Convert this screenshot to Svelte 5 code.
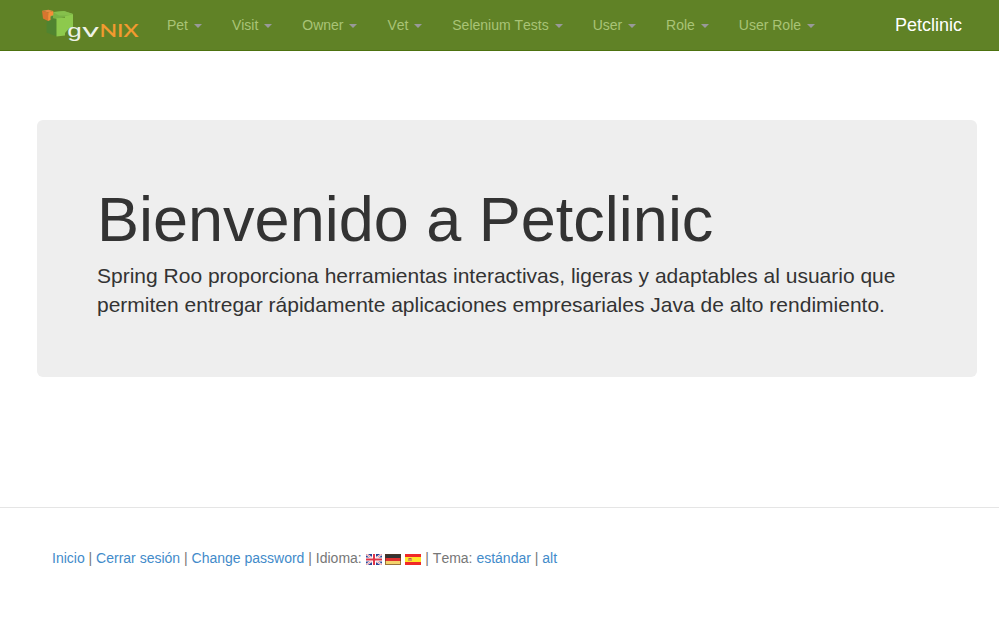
<script>
  const menus = ['Pet', 'Visit', 'Owner', 'Vet', 'Selenium Tests', 'User', 'Role', 'User Role'];
</script>

<header>
  <a class="logo" href="#home" aria-label="gvNIX">
    <svg width="100" height="36" viewBox="40 6 100 36">
      <polygon points="46.5,17 57,19 56.8,36.5 46.5,32.5" fill="#508430" />
      <polygon points="51,12.5 64,11 73,14 72.5,15.5 57,19 47,17" fill="#79b244" />
      <polygon points="53,12 64,11 73,14 67,15.5 59,15.5" fill="#86bf4c" />
      <polygon points="56.5,18.3 65,17.7 65,16.2 73,14.3 73,27.5 69,28.5 65,33 65,35.5 56.5,36.5" fill="#8dc94d" />
      <polygon points="49,17.5 53,15.5 53,19 50,21" fill="#548834" />
      <polygon points="42,10.8 48.5,9.8 53.3,11 48.5,12.6" fill="#e68a45" />
      <polygon points="42,10.8 48.5,12.4 48,21 43,18.5" fill="#d8752f" />
      <polygon points="48.3,12.4 53.3,11 53.3,15.2 50.5,16 50.5,20 48,21" fill="#f68d38" />
      <g transform="translate(67.2 36.7) scale(1.45 1)">
        <text class="light">g</text>
      </g>
      <g transform="translate(82 37) scale(1.75 1)">
        <text class="light thin">v</text>
      </g>
      <text x="99.4" y="37" textLength="39" lengthAdjust="spacingAndGlyphs" fill="#f49b30">NIX</text>
    </svg>
  </a>
  <nav>
    {#each menus as menu}
      <a href="#menu">{menu} <b class="caret"></b></a>
    {/each}
  </nav>
  <a class="brand" href="#home">Petclinic</a>
</header>

<main>
  <h1>Bienvenido a Petclinic</h1>
  <p>Spring Roo proporciona herramientas interactivas, ligeras y adaptables al usuario que permiten entregar rápidamente aplicaciones empresariales Java de alto rendimiento.</p>
</main>

<footer>
  <a href="#home">Inicio</a> | <a href="#logout">Cerrar sesión</a> | <a href="#password">Change password</a> | Idioma:
  <svg class="flag" width="16" height="11" viewBox="0 0 16 11">
    <rect width="16" height="11" fill="#2c4596" />
    <path d="M0 0L16 11M16 0L0 11" stroke="#fff" stroke-width="2" />
    <path d="M0 0L16 11M16 0L0 11" stroke="#e35b68" stroke-width=".7" />
    <path d="M8 0V11M0 5.5H16" stroke="#fff" stroke-width="4" />
    <path d="M8 0V11" stroke="#df3549" stroke-width="2" />
    <path d="M0 5.5H16" stroke="#df3549" stroke-width="2" />
  </svg>
  <svg class="flag german" width="16" height="11" viewBox="0 0 16 11">
    <rect width="16" height="4" fill="#333" />
    <rect y="4" width="16" height="3" fill="#e03030" />
    <rect y="7" width="16" height="4" fill="#f4d36c" />
    <rect x=".5" y=".5" width="15" height="10" fill="none" stroke="#5b351d" stroke-opacity=".6" />
  </svg>
  <svg class="flag" width="16" height="11" viewBox="0 0 16 11">
    <rect width="16" height="11" fill="#f02828" />
    <rect y="3" width="16" height="5" fill="#ffe52c" />
    <path d="M3 4h4v3H3z" fill="#d29855" />
    <path d="M4 4h2v1H4z" fill="#c15b40" />
  </svg>
  | Tema: <a href="#standard">estándar</a> | <a href="#alt">alt</a>
</footer>

<style>
  :global(body) {
    margin: 0;
    background: #fff;
    font: 14px/20px "Liberation Sans", Arial, sans-serif;
    font-kerning: none;
  }
  a {
    text-decoration: none;
  }
  header {
    box-sizing: border-box;
    height: 51px;
    padding: 0 37px 0 40px;
    display: flex;
    background: #608226;
    border-bottom: 1px solid #4d720f;
  }
  .logo {
    padding-top: 6px;
  }
  .logo svg {
    display: block;
  }
  .logo text {
    font: 17px Lato, sans-serif;
    stroke: #f49b30;
    stroke-width: 0.2;
  }
  .logo .light {
    font: 18px "Liberation Sans", sans-serif;
    fill: #eef2e8;
    stroke: none;
  }
  .logo .thin {
    font: 19px Lato, sans-serif;
  }
  nav {
    display: flex;
    padding-left: 12px;
  }
  nav a {
    padding: 15px;
    color: #a9c476;
    white-space: nowrap;
  }
  .caret {
    display: inline-block;
    margin-left: 2px;
    vertical-align: middle;
    border-top: 4px solid #999;
    border-right: 4px solid transparent;
    border-left: 4px solid transparent;
  }
  .brand {
    margin-left: auto;
    padding-top: 15px;
    font-size: 18px;
    color: #fff;
  }
  main {
    box-sizing: border-box;
    width: 940px;
    height: 257px;
    margin: 69px 0 0 37px;
    padding: 65px 60px 0;
    border-radius: 6px;
    background: #eee;
    color: #333;
  }
  h1 {
    margin: 0 0 7px;
    font-size: 63px;
    line-height: 69px;
    font-weight: normal;
  }
  p {
    margin: 0;
    font-size: 21px;
    line-height: 29px;
  }
  footer {
    margin-top: 130px;
    padding: 40px 52px;
    border-top: 1px solid #e5e5e5;
    color: #777;
  }
  footer a {
    color: #428bca;
  }
  .flag {
    vertical-align: -2px;
  }
  .german {
    margin: 0 0.4px 0 -0.4px;
  }
</style>
